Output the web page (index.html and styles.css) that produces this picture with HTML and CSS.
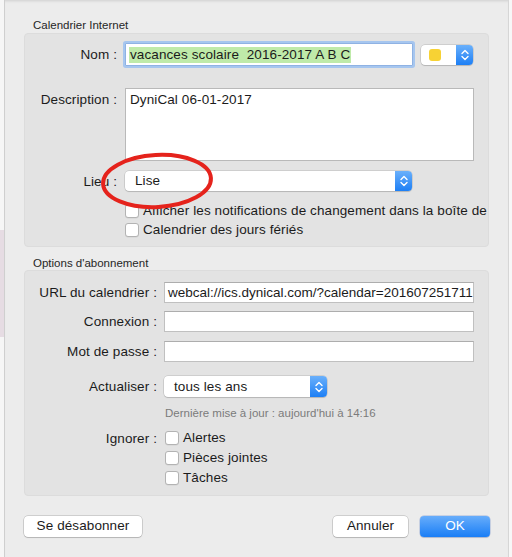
FILE: index.html
```html
<!DOCTYPE html>
<html lang="fr">
<head>
<meta charset="utf-8">
<link rel="stylesheet" href="styles.css">
</head>
<body>
<div class="screen">
  <div class="backdrop-left"><div class="pink"></div></div>
  <div class="sheet">
    <div class="group-title">Calendrier Internet</div>
    <div class="box box1">
      <div class="row row-nom">
        <span class="lbl lbl1">Nom :</span>
        <div class="field input nom focused"><span class="sel">vacances scolaire&nbsp; 2016-2017 A B C</span></div>
        <div class="popup color-popup">
          <span class="popup-body"><span class="swatch"></span></span>
          <span class="stepper"><svg width="10" height="14" viewBox="0 0 10 14"><path d="M2 5.5 L5 2.5 L8 5.5 M2 8.5 L5 11.5 L8 8.5" fill="none" stroke="#fff" stroke-width="1.4" stroke-linecap="round" stroke-linejoin="round"/></svg></span>
        </div>
      </div>
      <div class="row row-desc">
        <span class="lbl lbl1 lbl-top">Description :</span>
        <div class="field textarea">DyniCal 06-01-2017</div>
      </div>
      <div class="row row-lieu">
        <span class="lbl lbl1">Lieu :</span>
        <div class="popup lieu-popup">
          <span class="popup-body">Lise</span>
          <span class="stepper"><svg width="10" height="14" viewBox="0 0 10 14"><path d="M2 5.5 L5 2.5 L8 5.5 M2 8.5 L5 11.5 L8 8.5" fill="none" stroke="#fff" stroke-width="1.4" stroke-linecap="round" stroke-linejoin="round"/></svg></span>
        </div>
      </div>
      <div class="row check-row cr1">
        <span class="spacer1"></span>
        <span class="check"></span><span class="check-text">Afficher les notifications de changement dans la boîte de</span>
      </div>
      <div class="row check-row cr2">
        <span class="spacer1"></span>
        <span class="check"></span><span class="check-text">Calendrier des jours fériés</span>
      </div>
    </div>

    <div class="group-title gt2">Options d'abonnement</div>
    <div class="box box2">
      <div class="row r-url">
        <span class="lbl lbl2">URL du calendrier :</span>
        <div class="field input wide url">webcal://ics.dynical.com/?calendar=201607251711</div>
      </div>
      <div class="row r-cnx">
        <span class="lbl lbl2">Connexion :</span>
        <div class="field input wide"></div>
      </div>
      <div class="row r-mdp">
        <span class="lbl lbl2">Mot de passe :</span>
        <div class="field input wide"></div>
      </div>
      <div class="row r-act">
        <span class="lbl lbl2">Actualiser :</span>
        <div class="popup act-popup">
          <span class="popup-body">tous les ans</span>
          <span class="stepper"><svg width="10" height="14" viewBox="0 0 10 14"><path d="M2 5.5 L5 2.5 L8 5.5 M2 8.5 L5 11.5 L8 8.5" fill="none" stroke="#fff" stroke-width="1.4" stroke-linecap="round" stroke-linejoin="round"/></svg></span>
        </div>
      </div>
      <div class="row r-note">
        <span class="spacer2"></span>
        <span class="note">Dernière mise à jour : aujourd'hui à 14:16</span>
      </div>
      <div class="row ig ig1">
        <span class="lbl lbl2">Ignorer :</span>
        <span class="check c2"></span><span class="check-text">Alertes</span>
      </div>
      <div class="row ig ig2">
        <span class="spacer2"></span>
        <span class="check c2"></span><span class="check-text">Pièces jointes</span>
      </div>
      <div class="row ig ig3">
        <span class="spacer2"></span>
        <span class="check c2"></span><span class="check-text">Tâches</span>
      </div>
    </div>

    <div class="buttons">
      <span class="btn unsub">Se désabonner</span>
      <span class="grow"></span>
      <span class="btn cancel">Annuler</span>
      <span class="btn ok">OK</span>
    </div>

    <svg class="annot" width="120" height="64" viewBox="0 0 120 64">
      <ellipse cx="60" cy="32" rx="54" ry="26" fill="none" stroke="#e5231c" stroke-width="4"/>
    </svg>
  </div>
</div>
</body>
</html>
```

FILE: styles.css
```css
* { box-sizing: border-box; }
html, body { margin: 0; padding: 0; }
body {
  font-family: "Liberation Sans", Arial, sans-serif;
  font-size: 13.5px;
  letter-spacing: 0.1px;
  color: #1b1b1b;
  background: #f6f6f6;
}
.screen {
  width: 512px;
  height: 557px;
  display: flex;
  overflow: hidden;
  background: #f7f7f7;
}
.backdrop-left {
  width: 4px;
  height: 557px;
  background: #f6f6f6;
  display: flex;
  flex-direction: column;
  padding-top: 230px;
}
.backdrop-left .pink {
  height: 107px;
  background: #e6dce3;
}
.sheet {
  position: relative;
  width: 505px;
  height: 557px;
  background: #ececec;
  border-left: 1px solid #cfcfcf;
  border-right: 1px solid #d6d6d6;
  box-shadow: inset 0 3px 3px -2px rgba(0,0,0,0.12);
  padding: 18px 19px 0 19px;
  display: flex;
  flex-direction: column;
}
.group-title {
  font-size: 11.5px;
  letter-spacing: 0;
  line-height: 14px;
  height: 14px;
  padding-left: 9px;
  color: #262626;
}
.gt2 { margin-top: 9px; }
.box {
  background: #e3e3e3;
  border: 1px solid #dcdcdc;
  border-radius: 4px;
  display: flex;
  flex-direction: column;
}
.box1 { margin-top: 1px; height: 214px; padding-top: 9px; overflow: hidden; }
.box2 { height: 226px; padding-top: 11px; }

.row { display: flex; align-items: center; }
.lbl { text-align: right; white-space: nowrap; }
.lbl1 { width: 92px; margin-right: 8px; flex: none; }
.lbl2 { width: 132px; margin-right: 7px; flex: none; }
.spacer1 { width: 100px; flex: none; }
.spacer2 { width: 139px; flex: none; }

.field {
  background: #fff;
  border: 1px solid #c0c0c0;
  border-top-color: #adadad;
  white-space: nowrap;
  overflow: hidden;
}
.input { height: 21px; line-height: 19px; padding-left: 3px; }
.row-nom { height: 23px; }
.nom {
  width: 288px;
  height: 23px;
  line-height: 21px;
  border: 1px solid #8fb2e3;
  box-shadow: 0 0 0 2px #a6c6ef;
  padding-left: 3px;
  border-radius: 1px;
}
.sel {
  background: #bfeaa9;
  padding: 0 1px;
  display: inline-block;
  line-height: 16px;
}
.color-popup { margin-left: 8px; width: 52px; height: 21px; }

.row-desc { margin-top: 22px; align-items: flex-start; }
.lbl-top { padding-top: 4px; }
.textarea {
  width: 349px;
  height: 73px;
  padding: 3px 0 0 4px;
  line-height: 16px;
  border-color: #b9b9b9;
}

.row-lieu { margin-top: 10px; }
.popup {
  display: flex;
  height: 20px;
  border-radius: 4px;
  overflow: hidden;
  box-shadow: 0 0 0 0.5px rgba(0,0,0,0.18), 0 1px 1px rgba(0,0,0,0.12);
  background: #fff;
}
.popup-body {
  flex: 1;
  line-height: 20px;
  padding-left: 10px;
  display: flex;
  align-items: center;
}
.stepper {
  width: 17px;
  flex: none;
  background: linear-gradient(#6ab0fb, #1d7ff5);
  display: flex;
  align-items: center;
  justify-content: center;
}
.lieu-popup { width: 287px; }
.swatch {
  width: 12px;
  height: 12px;
  border-radius: 3px;
  background: #f7d234;
  margin-left: -2px;
}

.check-row { height: 16px; }
.cr1 { margin-top: 12px; }
.cr2 { margin-top: 3px; }
.check {
  width: 14px;
  height: 14px;
  flex: none;
  background: #fff;
  border: 1px solid #b3b3b3;
  border-radius: 3px;
  box-shadow: 0 0.5px 0.5px rgba(0,0,0,0.08);
}
.check-text { margin-left: 4px; white-space: nowrap; line-height: 16px; }

.wide { width: 310px; }
.url { padding-left: 3px; letter-spacing: 0; }
.r-cnx { margin-top: 8px; }
.r-mdp { margin-top: 9px; }
.r-act { margin-top: 14px; }
.act-popup { width: 163px; height: 21px; }
.r-note { margin-top: 9px; height: 14px; }
.note { font-size: 11.5px; letter-spacing: 0; color: #7b7b7b; line-height: 14px; padding-left: 1px; }
.ig { height: 16px; }
.ig1 { margin-top: 10px; }
.ig2, .ig3 { margin-top: 4px; }
.c2 { margin-left: 1px; }

.buttons {
  display: flex;
  margin-top: 20px;
  height: 21px;
  margin-right: -1px;
}
.grow { flex: 1; }
.btn {
  height: 21px;
  line-height: 20px;
  text-align: center;
  border-radius: 4px;
  background: #fff;
  box-shadow: 0 0 0 0.5px rgba(0,0,0,0.25), 0 1px 1px rgba(0,0,0,0.12);
  border: none;
}
.unsub { width: 118px; }
.cancel { width: 75px; }
.ok {
  width: 70px;
  margin-left: 12px;
  color: #fff;
  background: linear-gradient(#67adfb, #1a7ef6);
  box-shadow: 0 0 0 0.5px rgba(0,60,180,0.3), 0 1px 1px rgba(0,0,0,0.12);
}

.annot {
  position: absolute;
  left: 92px;
  top: 149px;
  transform: rotate(-3deg);
}
```
